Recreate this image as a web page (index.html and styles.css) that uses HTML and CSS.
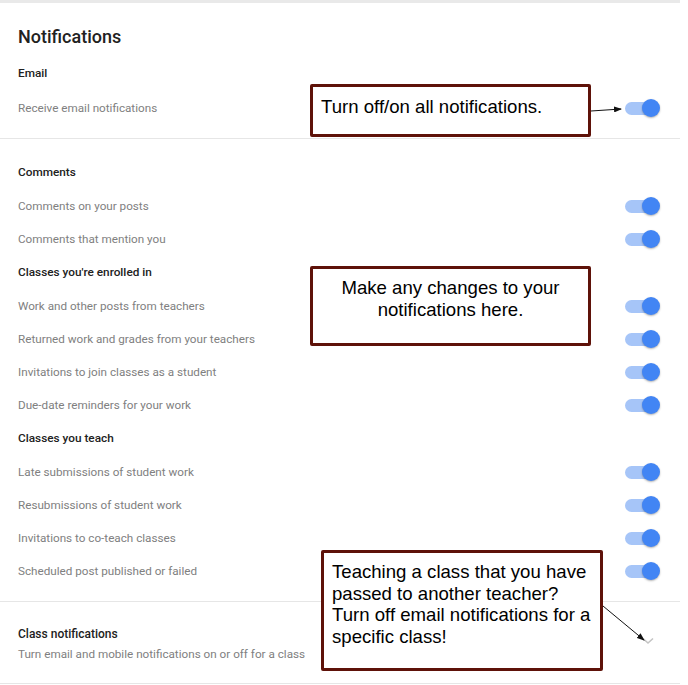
FILE: index.html
```html
<!DOCTYPE html>
<html lang="en">

<head>
	<meta charset="UTF-8">
	<meta name="viewport" content="width=device-width, initial-scale=1.0">
	<title>Notification settings</title>
	<link rel="stylesheet" href="styles.css">
</head>

<body>
	<div class="page">
		<div class="card">
			<section class="group group-top">
				<h1 class="page-title">Notifications</h1>
				<div class="label">Email</div>
				<div class="row row-tall">
					<span>Receive email notifications</span>
					<span class="toggle"></span>
				</div>
			</section>

			<section class="group group-list">
				<div class="label">Comments</div>
				<div class="row"><span>Comments on your posts</span><span class="toggle"></span></div>
				<div class="row"><span>Comments that mention you</span><span class="toggle"></span></div>

				<div class="label">Classes you're enrolled in</div>
				<div class="row"><span>Work and other posts from teachers</span><span class="toggle"></span></div>
				<div class="row"><span>Returned work and grades from your teachers</span><span class="toggle"></span></div>
				<div class="row"><span>Invitations to join classes as a student</span><span class="toggle"></span></div>
				<div class="row"><span>Due-date reminders for your work</span><span class="toggle"></span></div>

				<div class="label">Classes you teach</div>
				<div class="row"><span>Late submissions of student work</span><span class="toggle"></span></div>
				<div class="row"><span>Resubmissions of student work</span><span class="toggle"></span></div>
				<div class="row"><span>Invitations to co-teach classes</span><span class="toggle"></span></div>
				<div class="row"><span>Scheduled post published or failed</span><span class="toggle"></span></div>
			</section>

			<section class="group group-class">
				<div class="class-text">
					<div class="class-title">Class notifications</div>
					<div class="class-sub">Turn email and mobile notifications on or off for a class</div>
				</div>
				<span class="expand">
					<svg width="12" height="8" viewBox="0 0 12 8">
						<polyline points="1,1.5 6,6 11,1.5" fill="none" stroke="#c4c4c4" stroke-width="1.6" />
					</svg>
				</span>
			</section>
		</div>

		<!-- callouts drawn on top of the settings card -->
		<div class="callout callout-all">Turn off/on all notifications.</div>
		<div class="callout callout-changes">Make any changes to your<br>notifications here.</div>
		<div class="callout callout-class">Teaching a class that you have passed to another teacher?<br>Turn off email notifications for a specific class!</div>

		<svg class="arrows" width="688" height="685">
			<defs>
				<marker id="head" markerWidth="8" markerHeight="6" refX="7" refY="3" orient="auto" markerUnits="userSpaceOnUse">
					<polygon points="0,0 8,3 0,6" fill="#111" />
				</marker>
			</defs>
			<line x1="591" y1="111" x2="621" y2="109" stroke="#111" stroke-width="1" marker-end="url(#head)" />
			<line x1="603" y1="606" x2="644" y2="640" stroke="#111" stroke-width="1" marker-end="url(#head)" />
		</svg>
	</div>
</body>

</html>
```

FILE: styles.css
```css
body {
	margin: 0;
	font-family: Roboto, "Noto Sans", Arial, sans-serif;
	color: #212121;
	background: #fff;
}

.page {
	position: relative;
	width: 688px;
	height: 685px;
	overflow: hidden;
}

.card {
	width: 680px;
	border-top: 3px solid #e9e9e9;
}

.group {
	padding: 0 20px 0 18px;
	border-bottom: 1px solid #e6e6e6;
}

.group-top {
	padding-top: 22px;
	padding-bottom: 12px;
}

.group-list {
	padding-top: 16px;
	padding-bottom: 14px;
}

.group-class {
	display: flex;
	align-items: center;
	justify-content: space-between;
	padding-top: 24px;
	padding-bottom: 21px;
}

.page-title {
	margin: 0 0 7px;
	font-size: 18px;
	font-weight: 500;
	line-height: 24px;
	color: #212121;
}

.label {
	display: flex;
	align-items: center;
	height: 34px;
	font-size: 11.8px;
	font-weight: 500;
	color: #212121;
}

.row {
	display: flex;
	align-items: center;
	justify-content: space-between;
	height: 33px;
	font-size: 11.7px;
	color: #808080;
}

.row-tall {
	height: 36px;
}

/* switch in the "on" state */
.toggle {
	position: relative;
	width: 35px;
	height: 18px;
}

.toggle::before {
	content: "";
	position: absolute;
	left: 0;
	top: 3px;
	width: 28px;
	height: 13px;
	border-radius: 7px;
	background: #a6c5f8;
}

.toggle::after {
	content: "";
	position: absolute;
	right: 0;
	top: 0;
	width: 18px;
	height: 18px;
	border-radius: 50%;
	background: #4285f4;
	box-shadow: 0 1px 2px rgba(0, 0, 0, 0.3);
}

.class-title {
	font-size: 12px;
	font-weight: 500;
	line-height: 16px;
	color: #212121;
}

.class-sub {
	margin-top: 4px;
	font-size: 11.7px;
	line-height: 16px;
	color: #808080;
}

.expand {
	display: flex;
	align-items: center;
	justify-content: center;
	width: 24px;
	height: 24px;
	margin-bottom: 6px;
}

.callout {
	position: absolute;
	box-sizing: border-box;
	background: #fff;
	border: 3px solid #5e1209;
	border-radius: 2px;
	font-family: "Liberation Sans", Arial, sans-serif;
	font-size: 18.6px;
	line-height: 22px;
	color: #000;
	padding: 8px 8px;
}

.callout-all {
	left: 310px;
	top: 84px;
	width: 281px;
	height: 53px;
	padding-top: 9px;
	padding-left: 8px;
}

.callout-changes {
	left: 310px;
	top: 266px;
	width: 281px;
	height: 80px;
	text-align: center;
}

.callout-class {
	left: 321px;
	top: 550px;
	width: 282px;
	height: 121px;
	line-height: 21.7px;
}

.arrows {
	position: absolute;
	left: 0;
	top: 0;
	pointer-events: none;
}
```
